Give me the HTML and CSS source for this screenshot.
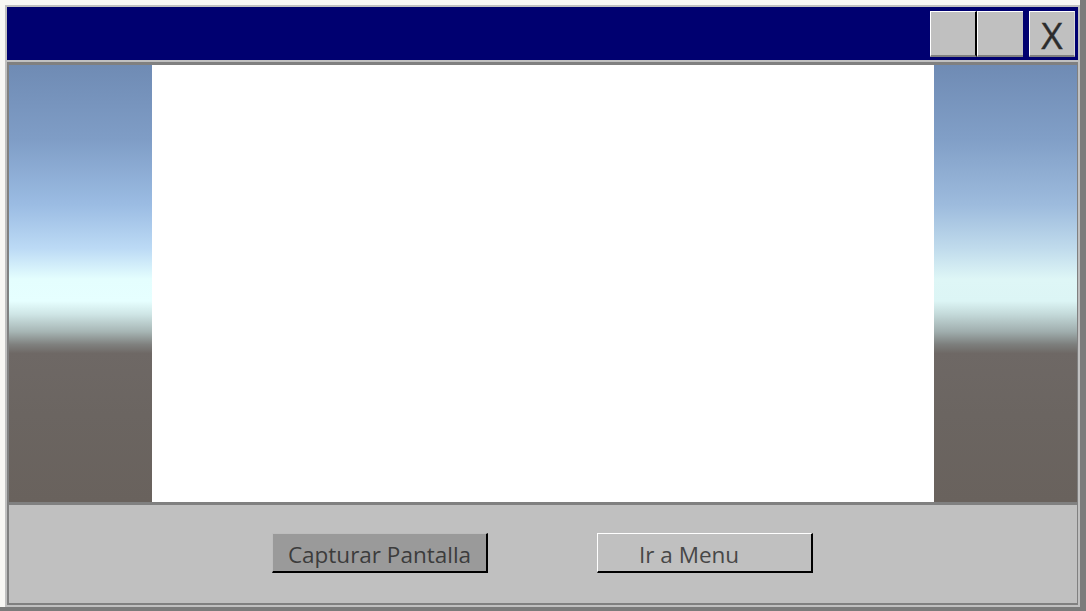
FILE: index.html
```html
<!DOCTYPE html>
<html lang="es">
<head>
<meta charset="utf-8">
<title>Captura</title>
<link rel="stylesheet" href="styles.css">
</head>
<body>
<div class="desk">
  <div class="window">
    <div class="titlebar">
      <div class="tb-btn tb-first"></div>
      <div class="tb-btn"></div>
      <div class="tb-btn tb-close">X</div>
    </div>
    <div class="sep"></div>
    <div class="frame">
      <div class="viewport">
        <div class="sky"></div>
        <div class="canvas"></div>
        <div class="sky sky-right"></div>
      </div>
      <div class="panel">
        <button class="btn btn-capture">Capturar Pantalla</button>
        <button class="btn btn-menu">Ir a Menu</button>
      </div>
    </div>
  </div>
</div>
</body>
</html>
```
FILE: styles.css
```css
html, body {
  margin: 0;
  padding: 0;
  background: #f8f7f4;
}
.desk {
  width: 1086px;
  height: 611px;
  box-sizing: border-box;
  padding: 5px 0 0 5px;
  border-right: 6px solid #7b7b7b;
  border-bottom: 4px solid #7b7b7b;
}
.window {
  width: 1075px;
  height: 602px;
  box-sizing: border-box;
  border: 2px solid #c0c0c0;
  background: #c0c0c0;
  display: flex;
  flex-direction: column;
}
.titlebar {
  height: 53px;
  background: #000070;
  display: flex;
  align-items: flex-start;
  justify-content: flex-end;
  padding: 4px 3px 0 0;
  box-sizing: border-box;
}
.tb-btn {
  width: 46px;
  height: 46px;
  box-sizing: border-box;
  background: #c0c0c0;
  border-top: 1px solid #ffffff;
  border-left: 1px solid #ffffff;
  border-bottom: 2px solid #808080;
}
.tb-first {
  width: 47px;
  border-right: 2px solid #000000;
}
.tb-close {
  margin-left: 6px;
  border-right: 1px solid #d8d8d8;
  font-family: "Open Sans", "DejaVu Sans", sans-serif;
  font-size: 37px;
  line-height: 45px;
  text-align: center;
  color: #2c2c2c;
  -webkit-text-stroke: 0.4px #2c2c2c;
}
.sep {
  height: 2px;
  background: #c0c0c0;
}
.frame {
  flex: 1;
  display: flex;
  flex-direction: column;
  border-top: 3px solid #808080;
  border-left: 2px solid #808080;
  border-right: 1px solid #808080;
  border-bottom: 2px solid #808080;
}
.viewport {
  height: 437px;
  display: flex;
}
.sky {
  width: 143px;
  background: linear-gradient(to bottom,
    #6f8bb4 0%,
    #7f9dc6 17%,
    #9bbce3 32%,
    #bcdaf5 42%,
    #e4fefe 49%,
    #e6ffff 54%,
    #cfe6e6 57%,
    #a7b6b5 61%,
    #7f807e 64%,
    #6e6865 66%,
    #6b6561 80%,
    #69625d 100%);
}
.sky-right {
  background: linear-gradient(to bottom,
    #6f8bb4 0%,
    #819fc7 17%,
    #9dbbdd 32%,
    #c0dbec 42%,
    #def6f6 49%,
    #dcf5f5 54%,
    #c4dada 57%,
    #a0aeae 61%,
    #7c7e7c 64%,
    #6e6865 66%,
    #6b6561 80%,
    #69625d 100%);
}
.canvas {
  flex: 1;
  background: #ffffff;
}
.panel {
  flex: 1;
  border-top: 3px solid #808080;
  background: #c0c0c0;
  display: flex;
  align-items: flex-start;
  padding: 28px 0 0 263px;
  gap: 109px;
}
.btn {
  width: 216px;
  height: 40px;
  box-sizing: border-box;
  margin: 0;
  padding: 1px 0 0 0;
  font-family: "Open Sans", "DejaVu Sans", sans-serif;
  font-size: 22.5px;
  line-height: 40px;
  color: #3c3c3c;
  border-top: 1px solid #ffffff;
  border-left: 1px solid #ffffff;
  border-right: 2px solid #000000;
  border-bottom: 2px solid #000000;
  text-align: center;
}
.btn-capture {
  background: #9a9a9a;
  border-top-color: #bdbdbd;
  border-left-color: #bdbdbd;
}
.btn-menu {
  background: #c0c0c0;
  text-align: left;
  padding-left: 41px;
  color: #474747;
}
```
